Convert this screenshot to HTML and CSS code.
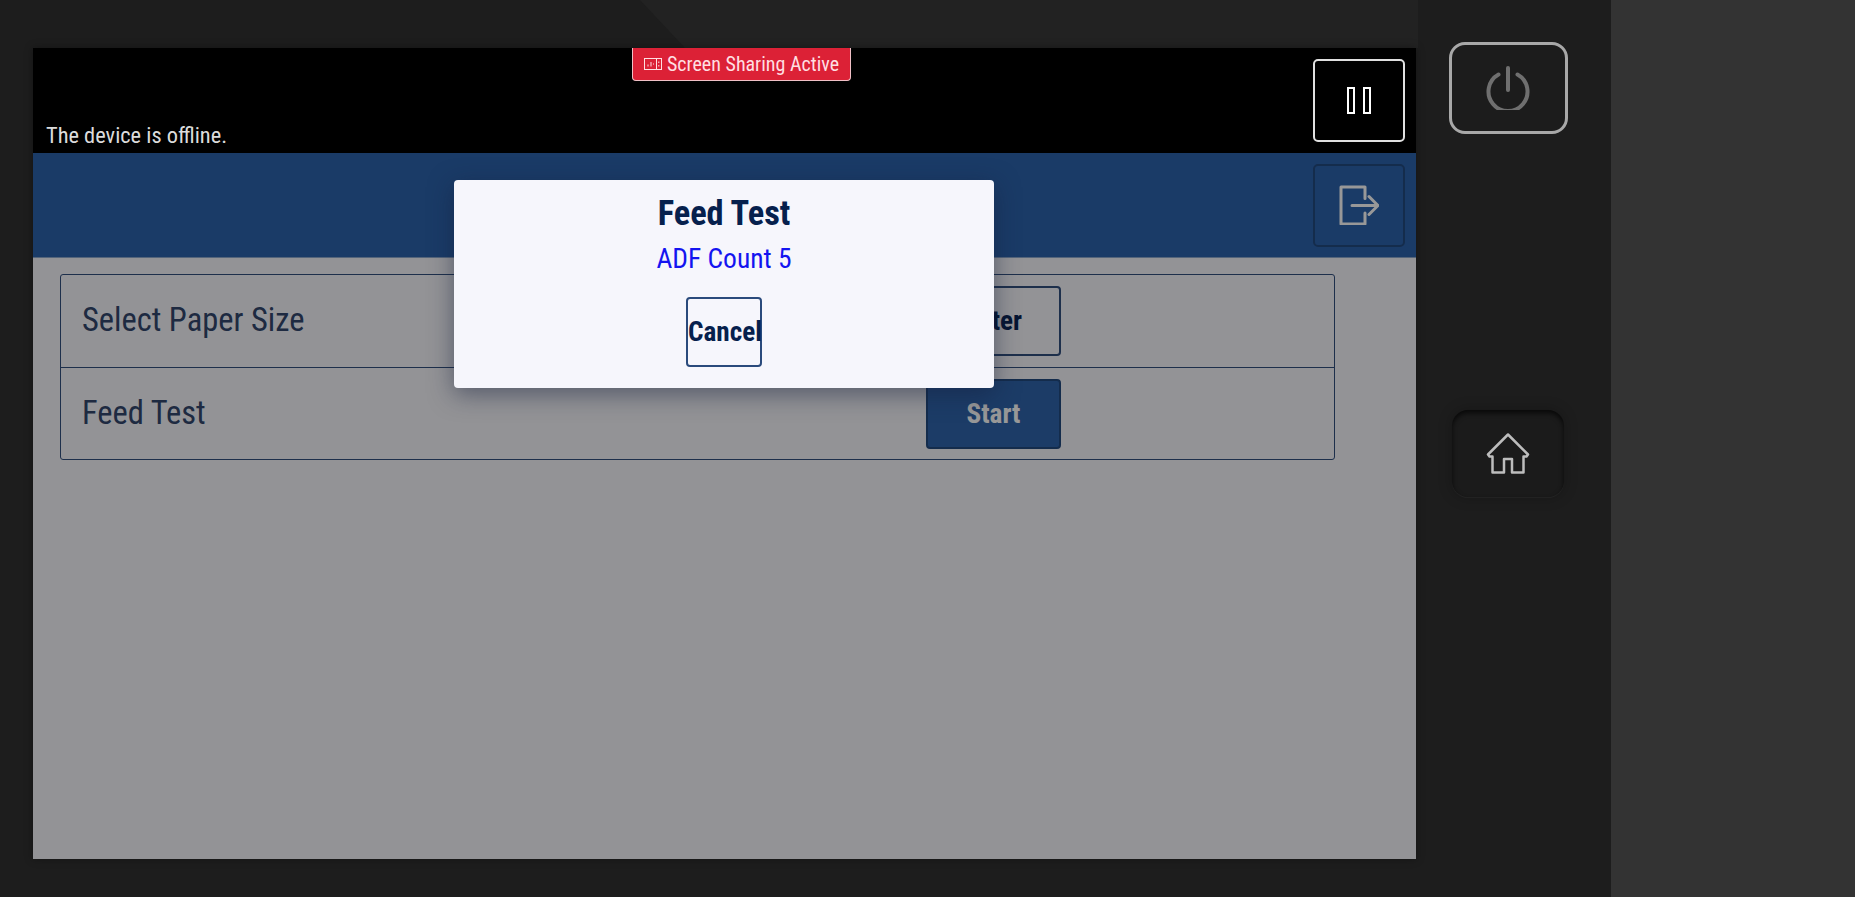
FILE: index.html
```html
<!DOCTYPE html>
<html lang="en">
<head>
    <meta charset="UTF-8">
    <meta name="viewport" content="width=device-width, initial-scale=1.0">
    <title>Feed Test</title>
    <link rel="stylesheet" href="styles.css">
</head>
<body>
    <div class="device">
        <div class="screen">
            <div class="status-bar">
                <div class="sharing-badge">
                    <svg class="sharing-icon" viewBox="0 0 18 12" width="18" height="12" fill="none" stroke="currentColor">
                        <rect x="0.5" y="0.5" width="17" height="11"/>
                        <path d="M12.5 1v10M4 6.5v2M7 4v4.500M9.500 5.500v1M14.800 3.500v1.500M14.800 7v1.500"/>
                    </svg>
                    <span>Screen Sharing Active</span>
                </div>
                <span class="offline-text">The device is offline.</span>
                <button class="pause-button" aria-label="Pause">
                    <svg viewBox="0 0 24 27" width="24" height="27" fill="none" stroke="#fff" stroke-width="2">
                        <rect x="1" y="1" width="6" height="25"/>
                        <rect x="17" y="1" width="6" height="25"/>
                    </svg>
                </button>
            </div>
            <div class="app">
                <div class="app-header">
                    <button class="logout-button" aria-label="Log out">
                        <svg viewBox="0 0 40 40" width="40" height="40" fill="none" stroke="#fff" stroke-width="3" stroke-linejoin="round" stroke-linecap="round">
                            <path d="M26 13.500V2H2v37h24V28"/>
                            <path d="M13 20.500h26M30 11.500l9 9-9 9"/>
                        </svg>
                    </button>
                </div>
                <div class="settings-table">
                    <div class="settings-row">
                        <span class="row-label">Select Paper Size</span>
                        <button class="row-button">Enter</button>
                    </div>
                    <div class="settings-row">
                        <span class="row-label">Feed Test</span>
                        <button class="row-button primary">Start</button>
                    </div>
                </div>
                <div class="overlay">
                    <div class="dialog">
                        <h2 class="dialog-title">Feed Test</h2>
                        <p class="dialog-count">ADF Count 5</p>
                        <button class="cancel-button">Cancel</button>
                    </div>
                </div>
            </div>
        </div>
        <div class="side-buttons">
            <button class="power-button" aria-label="Power">
                <svg viewBox="0 0 44 44" width="44" height="44" fill="none" stroke="#6f6f6f" stroke-width="4" stroke-linecap="round">
                    <path d="M12.500 8.500a19.500 19.500 0 1 0 19 0"/>
                    <path d="M22 2v22"/>
                </svg>
            </button>
            <button class="home-button" aria-label="Home">
                <svg viewBox="0 0 44 42" width="44" height="42" fill="none" stroke="#bdbdbd" stroke-width="2.500" stroke-linejoin="round">
                    <path d="M22 1.500L2 21.500l1.500 2H6.500V39.500H18V26h8V39.500H37.500V23.500h3l1.500-2z"/>
                </svg>
            </button>
        </div>
    </div>
    <div class="wall"></div>
</body>
</html>
```

FILE: styles.css
```css
* {
    box-sizing: border-box;
}
html, body {
    height: 100%;
}
body {
    margin: 0;
    display: flex;
    overflow: hidden;
    background-color: #333333;
    font-family: Roboto, "Liberation Sans", sans-serif;
    font-stretch: 75%;
}
button {
    font-family: inherit;
    font-stretch: inherit;
    padding: 0;
    cursor: pointer;
}
.device {
    position: relative;
    width: 1611px;
    height: 897px;
    padding: 48px 0 0 33px;
    display: flex;
    background-color: #1d1d1d;
}
/* the lighter wedge along the top edge */
.device::before {
    content: "";
    position: absolute;
    top: 0;
    left: 640px;
    width: 778px;
    height: 48px;
    background-color: #222222;
    clip-path: polygon(0 0, 100% 0, 100% 100%, 45px 100%);
}
.screen {
    position: relative;
    width: 1383px;
    height: 811px;
    display: flex;
    flex-direction: column;
    box-shadow: 0 0 8px rgba(0, 0, 0, 0.35);
}
.status-bar {
    position: relative;
    height: 105px;
    flex: none;
    display: flex;
    justify-content: space-between;
    padding: 11px 11px 0 13px;
    background-color: #000;
}
.sharing-badge {
    position: absolute;
    top: 0;
    left: 599px;
    width: 219px;
    height: 33px;
    display: flex;
    align-items: center;
    justify-content: center;
    gap: 5px;
    background-color: #dc2136;
    border: 1px solid #f0c0c6;
    border-top: none;
    border-radius: 0 0 4px 4px;
    color: #ffdfe2;
    font-size: 20px;
}
.sharing-icon {
    color: #ffdfe2;
}
.offline-text {
    align-self: flex-end;
    margin-bottom: 5px;
    color: #dcdcdc;
    font-size: 22.4px;
    line-height: 26px;
}
.pause-button {
    width: 92px;
    height: 83px;
    display: flex;
    align-items: center;
    justify-content: center;
    background-color: #000;
    border: 2px solid #e0e0e0;
    border-radius: 5px;
}
.app {
    position: relative;
    flex: 1;
    background-color: #f7f7fc;
}
.app-header {
    height: 105px;
    display: flex;
    align-items: center;
    justify-content: flex-end;
    padding-right: 11px;
    background-color: #2d64ae;
    border-bottom: 1px solid #8ea9cf;
}
.logout-button {
    width: 92px;
    height: 83px;
    display: flex;
    align-items: center;
    justify-content: center;
    background-color: #2d64ae;
    border: 2px solid #234a80;
    border-radius: 5px;
}
.settings-table {
    width: 1275px;
    margin: 16px 0 0 27px;
    border: 1.500px solid #31507f;
    border-radius: 3px;
}
.settings-row {
    height: 92px;
    display: flex;
    align-items: center;
    padding-left: 21px;
}
.settings-row + .settings-row {
    border-top: 1.500px solid #31507f;
}
.row-label {
    width: 844px;
    margin-top: -2px;
    color: #33476e;
    font-size: 32.500px;
}
.row-button {
    width: 135px;
    height: 70px;
    background-color: #f7f7fc;
    border: 2px solid #31507f;
    border-radius: 4px;
    color: #0a2454;
    font-size: 27.200px;
    font-weight: 700;
}
.row-button.primary {
    background-color: #2f65ad;
    border-color: #234a80;
    color: #fff;
}
.overlay {
    position: absolute;
    inset: 0;
    background-color: rgba(0, 0, 0, 0.405);
}
.dialog {
    position: absolute;
    top: 27px;
    left: 421px;
    width: 540px;
    height: 208px;
    display: flex;
    flex-direction: column;
    align-items: center;
    background-color: #f6f6fc;
    border-radius: 4px;
    box-shadow: 0 6px 24px rgba(20, 30, 60, 0.5);
}
.dialog-title {
    margin: 12px 0 0;
    color: #06204d;
    font-size: 34.400px;
    line-height: 42px;
    font-weight: 700;
}
.dialog-count {
    margin: 8px 0 0;
    color: #1414f0;
    font-size: 27.500px;
    line-height: 34px;
}
.cancel-button {
    margin-top: 21px;
    width: 76px;
    height: 70px;
    background-color: #f6f6fc;
    border: 2px solid #2a4a7c;
    border-radius: 4px;
    color: #06204d;
    font-size: 27.200px;
    font-weight: 700;
}
.side-buttons {
    position: relative;
    width: 184px;
    display: flex;
    flex-direction: column;
    align-items: center;
}
.power-button {
    width: 119px;
    height: 92px;
    margin-top: -6px;
    display: flex;
    align-items: center;
    justify-content: center;
    background-color: #1c1c1c;
    border: 3px solid #a8a8a8;
    border-radius: 16px;
}
.home-button {
    width: 112px;
    height: 87px;
    margin-top: 276px;
    display: flex;
    align-items: center;
    justify-content: center;
    background-color: #1b1b1b;
    border: none;
    border-radius: 16px;
    box-shadow: inset 0 3px 5px rgba(0, 0, 0, 0.7), 0 1px 1px rgba(255, 255, 255, 0.05), 0 0 14px rgba(0, 0, 0, 0.25);
}
.wall {
    flex: 1;
    background-color: #333333;
}
```
